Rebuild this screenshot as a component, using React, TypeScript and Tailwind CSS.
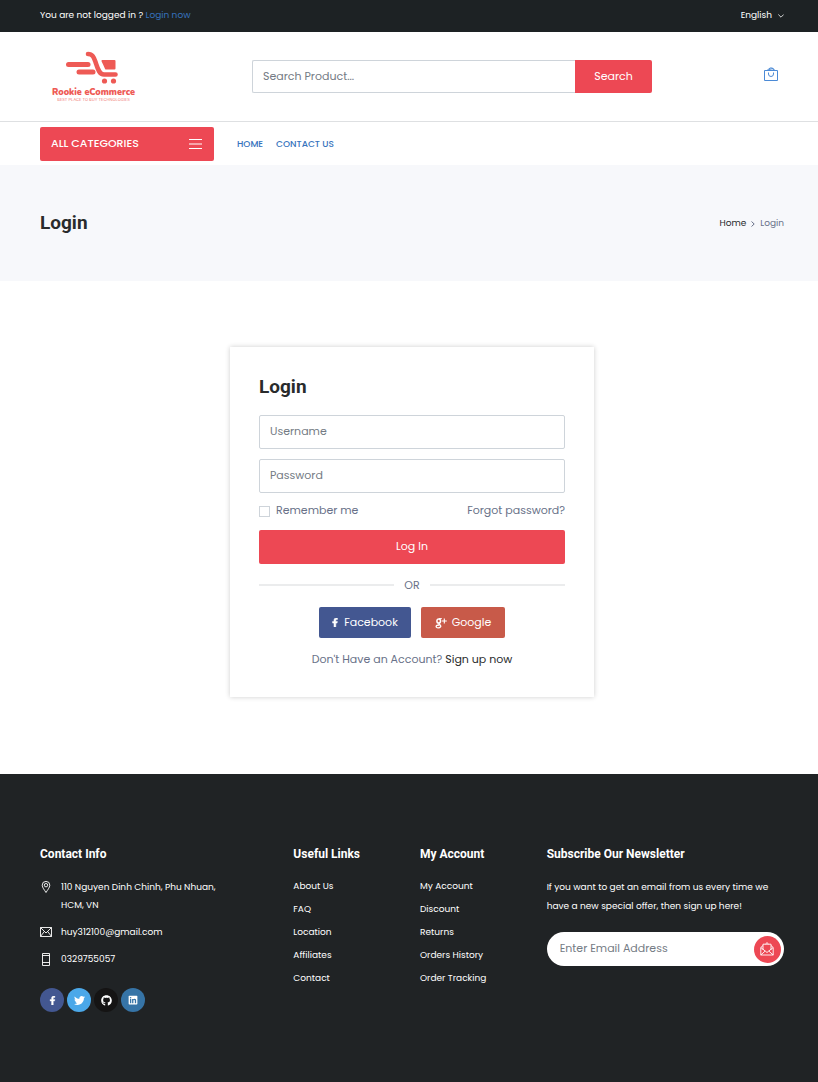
import React from "react";
import { FaFacebookF, FaGithub, FaLinkedin, FaTwitter } from "react-icons/fa";

const usefulLinks = ["About Us", "FAQ", "Location", "Affiliates", "Contact"];
const accountLinks = ["My Account", "Discount", "Returns", "Orders History", "Order Tracking"];

function Logo() {
  return (
    <a href="#" aria-label="Rookie eCommerce" className="flex w-[107px] flex-col items-center text-[#ee5a55]">
      <svg viewBox="0 0 52 33" className="mr-1 h-[33px] w-[52px]" fill="none" stroke="currentColor" strokeLinecap="round" strokeLinejoin="round">
        <path d="M2.5 13.5H22" strokeWidth="5" />
        <path d="M13 21H27" strokeWidth="5" />
        <path d="M22 3C27 3 28 7 29.500 11C31.500 17 33 23.500 38 23.500H49.500" strokeWidth="4.600" />
        <path d="M36.500 10H48.500V17.500H40Q38.500 14 36.500 10Z" fill="currentColor" strokeWidth="2" />
        <circle cx="38.500" cy="30" r="2.600" fill="currentColor" stroke="none" />
        <circle cx="47.500" cy="30" r="2.600" fill="currentColor" stroke="none" />
      </svg>
      <span className="mt-0.5 font-[Nunito,Inter,sans-serif] text-[9px] leading-3 font-black whitespace-nowrap">Rookie eCommerce</span>
      <span className="font-[Inter,sans-serif] text-[4px] leading-none whitespace-nowrap opacity-80">BEST PLACE TO BUY TECHNOLOGIES</span>
    </a>
  );
}

function BagIcon() {
  return (
    <svg viewBox="0 0 14 14" className="h-3.5 w-3.5" fill="none" stroke="currentColor">
      <path d="M.5 3.500H13.500V13.500H.5Z M3 3.500L6 1H8.500L11 3.500 M5 2.500L9 1.500L9.500 3.500" />
      <path d="M4.500 5.500V7A2.500 2.500 0 0 0 9.500 7V5.500" />
    </svg>
  );
}

function GooglePlusIcon() {
  return (
    <svg viewBox="0 0 12 12" className="h-3 w-3" fill="none" stroke="currentColor">
      <ellipse cx="3.700" cy="4" rx="1.800" ry="2.100" strokeWidth="1.500" />
      <path d="M4 1.600H6.800" strokeWidth="1" />
      <path d="M4.500 6C3 7 4.300 7.300 5.200 8.100C6.500 9.400 5.300 10.900 3.400 10.900C1.400 10.900 .6 9.500 1.600 8.600C2.200 8.100 3.200 8 4.300 8" strokeWidth="1.300" />
      <path d="M9.300 1.500V6.500M6.800 4H11.800" strokeWidth="1.100" />
    </svg>
  );
}

function PinIcon() {
  return (
    <svg viewBox="0 0 12 12" className="h-3 w-3" fill="none" stroke="currentColor" strokeWidth=".9">
      <path d="M6 11.500C4.500 9 2.200 6.500 2.200 4.200A3.800 3.800 0 0 1 9.800 4.200C9.800 6.500 7.500 9 6 11.500Z" />
      <circle cx="6" cy="4.200" r="1.700" />
    </svg>
  );
}

function MailIcon() {
  return (
    <svg viewBox="0 0 12 10" className="h-2.5 w-3" fill="none" stroke="currentColor" strokeWidth=".9">
      <path d="M.5 .5H11.500V9.500H.5ZM.5 .5L6 6L11.500 .5M.5 9.500L4.300 4.500M11.500 9.500L7.700 4.500" />
    </svg>
  );
}

function PhoneIcon() {
  return (
    <svg viewBox="0 0 12 13" className="h-[13px] w-3" fill="none" stroke="currentColor" strokeWidth=".9">
      <path d="M2.500 .5H9.500V12.500H2.500ZM2.500 2.500H9.500M2.500 9.500H9.500" />
    </svg>
  );
}

function OpenMailIcon() {
  return (
    <svg viewBox="0 0 14 14" className="h-3.5 w-3.5" fill="none" stroke="currentColor" strokeWidth=".9">
      <path d="M3 3.500L.8 5.500V13H13.200V5.500L11 3.500M3 8V2.200H11V8M5.500 2L7 .6L8.500 2M.8 5.500L5.200 9M13.200 5.500L8.800 9M.8 13L5.200 9L7 10.500L8.800 9L13.200 13" />
    </svg>
  );
}

function LinkColumn({ title, links }: { title: string; links: string[] }) {
  return (
    <nav className="col-span-2" aria-label={title}>
      <h2 className="font-[Roboto,sans-serif] text-[12px] leading-4 font-bold whitespace-nowrap">{title}</h2>
      <ul className="mt-[13px] text-[9px] leading-[23px]">
        {links.map((link) => (
          <li key={link}>
            <a href="#">{link}</a>
          </li>
        ))}
      </ul>
    </nav>
  );
}

const inputStyle =
  "block h-[34px] w-full rounded-xs border border-[#ced4da] bg-white px-2.5 pb-0.5 text-[11px] text-[#292b2c] outline-none placeholder:text-[#747b84]";

export default function App() {
  return (
    <div className="flex min-h-screen flex-col bg-white font-[Poppins,Inter,sans-serif] text-[11px] text-[#687188]">
      <div className="flex h-8 items-center justify-between bg-[#1d2224] pr-[34px] pl-10 text-[9px] text-white">
        <p>
          You are not logged in ?{" "}
          <a href="#" className="text-[#3672bd]">
            Login now
          </a>
        </p>
        <button type="button" className="flex items-center gap-1.5">
          English
          <svg viewBox="0 0 6 4" className="h-1 w-1.5" fill="none" stroke="currentColor" strokeWidth=".8">
            <path d="M.3 .5L3 3.200L5.700 .5" />
          </svg>
        </button>
      </div>

      <header>
        <div className="flex h-[90px] items-center border-b border-[#dee0e2] pr-10 pl-10">
          <Logo />
          <form className="ml-[105px] flex w-[400px]" onSubmit={(e) => e.preventDefault()}>
            <input
              type="search"
              aria-label="Search products"
              placeholder="Search Product..."
              className="h-[33px] min-w-0 flex-1 rounded-l-xs border border-r-0 border-[#ced4da] px-2.5 text-[11px] outline-none placeholder:text-[#747b84]"
            />
            <button type="submit" className="h-[33px] w-[77px] rounded-r-xs bg-[#ed4854] text-white">
              Search
            </button>
          </form>
          <a href="#" aria-label="Cart" className="ml-auto pb-1.5 text-[#4b8ad6]">
            <BagIcon />
          </a>
        </div>
        <div className="flex h-[43px] items-center pr-[34px] pl-10">
          <button type="button" className="flex h-[34px] w-[174px] items-center justify-between rounded-xs bg-[#ed4854] pr-3 pl-[11px] text-[11px] font-medium text-white">
            ALL CATEGORIES
            <svg viewBox="0 0 13 10" className="h-2.5 w-[13px]" stroke="currentColor">
              <path d="M0 .5H13M0 5H13M0 9.500H13" />
            </svg>
          </button>
          <nav aria-label="Main" className="ml-[23px] flex gap-[13px] pt-0.5 text-[9px] font-medium text-[#3672bd]">
            <a href="#">HOME</a>
            <a href="#">CONTACT US</a>
          </nav>
        </div>
      </header>

      <section className="flex h-[116px] items-center justify-between bg-[#f7f8fb] pr-[34px] pl-10">
        <h1 className="font-[Roboto,sans-serif] text-[19px] leading-6 font-bold text-[#292b2c]">Login</h1>
        <nav aria-label="Breadcrumb" className="flex items-center gap-[5px] pt-0.5 text-[9px]">
          <a href="#" className="text-[#292b2c]">
            Home
          </a>
          <svg viewBox="0 0 4 6" className="h-1.5 w-1" fill="none" stroke="currentColor">
            <path d="M.5 .5L3.200 3L.5 5.500" />
          </svg>
          <span>Login</span>
        </nav>
      </section>

      <main className="flex justify-center pt-[66px] pr-[34px] pb-[77px] pl-10">
        <section className="w-[364px] bg-white px-[29px] pt-7 pb-7 shadow-[0_0_5px_rgba(0,0,0,0.2)]">
          <h2 className="font-[Roboto,sans-serif] text-[19px] leading-6 font-bold text-[#292b2c]">Login</h2>
          <form className="mt-4" onSubmit={(e) => e.preventDefault()}>
            <input type="text" aria-label="Username" placeholder="Username" className={inputStyle} />
            <input type="password" aria-label="Password" placeholder="Password" className={`mt-2.5 ${inputStyle}`} />
            <div className="flex h-[37px] items-center justify-between pb-0.5">
              <label className="flex items-center gap-1.5">
                <input type="checkbox" className="mt-0.5 h-[11px] w-[11px] appearance-none border border-[#ced4da] checked:bg-[#ed4854]" />
                Remember me
              </label>
              <a href="#">Forgot password?</a>
            </div>
            <button type="submit" className="block h-[34px] w-full rounded-xs bg-[#ed4854] pb-0.5 text-white">
              Log In
            </button>
          </form>
          <div className="mt-[11px] flex h-5 items-center gap-2.5">
            <span className="h-0.5 flex-1 bg-[#ebeced]" />
            OR
            <span className="h-0.5 flex-1 bg-[#ebeced]" />
          </div>
          <div className="mt-3 flex justify-center gap-2.5 text-white">
            <button type="button" className="flex h-[31px] w-[92px] items-center justify-center gap-1.5 rounded-xs bg-[#435791]">
              <FaFacebookF className="h-[9px] w-1.5" stroke="currentColor" strokeWidth="30" />
              Facebook
            </button>
            <button type="button" className="flex h-[31px] w-[84px] items-center justify-center gap-[5px] rounded-xs bg-[#c85a49]">
              <GooglePlusIcon />
              Google
            </button>
          </div>
          <p className="mt-[11px] text-center leading-5">
            Don't Have an Account?{" "}
            <a href="#" className="text-[#292b2c]">
              Sign up now
            </a>
          </p>
        </section>
      </main>

      <footer className="flex-1 bg-[#202325] pt-[72px] pr-[34px] pb-[66px] pl-10 text-white">
        <div className="-mr-4 grid grid-cols-12">
          <section className="col-span-4 pr-4">
            <h2 className="font-[Roboto,sans-serif] text-[12px] leading-4 font-bold">Contact Info</h2>
            <address className="mt-4 flex flex-col gap-[9px] text-[9px] leading-[18px] not-italic">
              <p className="flex gap-[9px]">
                <span className="flex h-[18px] items-center">
                  <PinIcon />
                </span>
                <span>
                  110 Nguyen Dinh Chinh, Phu Nhuan,
                  <br />
                  HCM, VN
                </span>
              </p>
              <p className="flex items-center gap-[9px]">
                <MailIcon />
                <a href="mailto:huy312100@gmail.com">huy312100@gmail.com</a>
              </p>
              <p className="flex items-center gap-[9px]">
                <PhoneIcon />
                0329755057
              </p>
            </address>
            <div className="mt-5 flex gap-[3px]">
              <a href="#" aria-label="Facebook" className="flex h-6 w-6 items-center justify-center rounded-full bg-[#435791]">
                <FaFacebookF className="h-[9px] w-[9px]" stroke="currentColor" strokeWidth="20" />
              </a>
              <a href="#" aria-label="Twitter" className="flex h-6 w-6 items-center justify-center rounded-full bg-[#4ba8e9]">
                <FaTwitter className="h-[11px] w-[11px]" />
              </a>
              <a href="#" aria-label="GitHub" className="flex h-6 w-6 items-center justify-center rounded-full bg-[#151414]">
                <FaGithub className="h-[11px] w-[11px]" />
              </a>
              <a href="#" aria-label="LinkedIn" className="flex h-6 w-6 items-center justify-center rounded-full bg-[#3674a7]">
                <FaLinkedin className="h-2.5 w-2.5" />
              </a>
            </div>
          </section>
          <LinkColumn title="Useful Links" links={usefulLinks} />
          <LinkColumn title="My Account" links={accountLinks} />
          <section className="col-span-4 pr-4">
            <h2 className="font-[Roboto,sans-serif] text-[12px] leading-4 font-bold">Subscribe Our Newsletter</h2>
            <p className="mt-4 text-[9px] leading-[19px]">
              If you want to get an email from us every time we have a new special offer, then sign up here!
            </p>
            <form
              className="mt-4 flex h-[34px] items-center rounded-full bg-white pr-[3px] pl-[13px]"
              onSubmit={(e) => e.preventDefault()}
            >
              <input
                type="email"
                aria-label="Email address"
                placeholder="Enter Email Address"
                className="min-w-0 flex-1 pb-0.5 text-[11px] text-[#292b2c] outline-none placeholder:text-[#747b84]"
              />
              <button type="submit" aria-label="Subscribe" className="flex h-[27px] w-[27px] items-center justify-center rounded-full bg-[#ed4854]">
                <OpenMailIcon />
              </button>
            </form>
          </section>
        </div>
      </footer>
    </div>
  );
}
